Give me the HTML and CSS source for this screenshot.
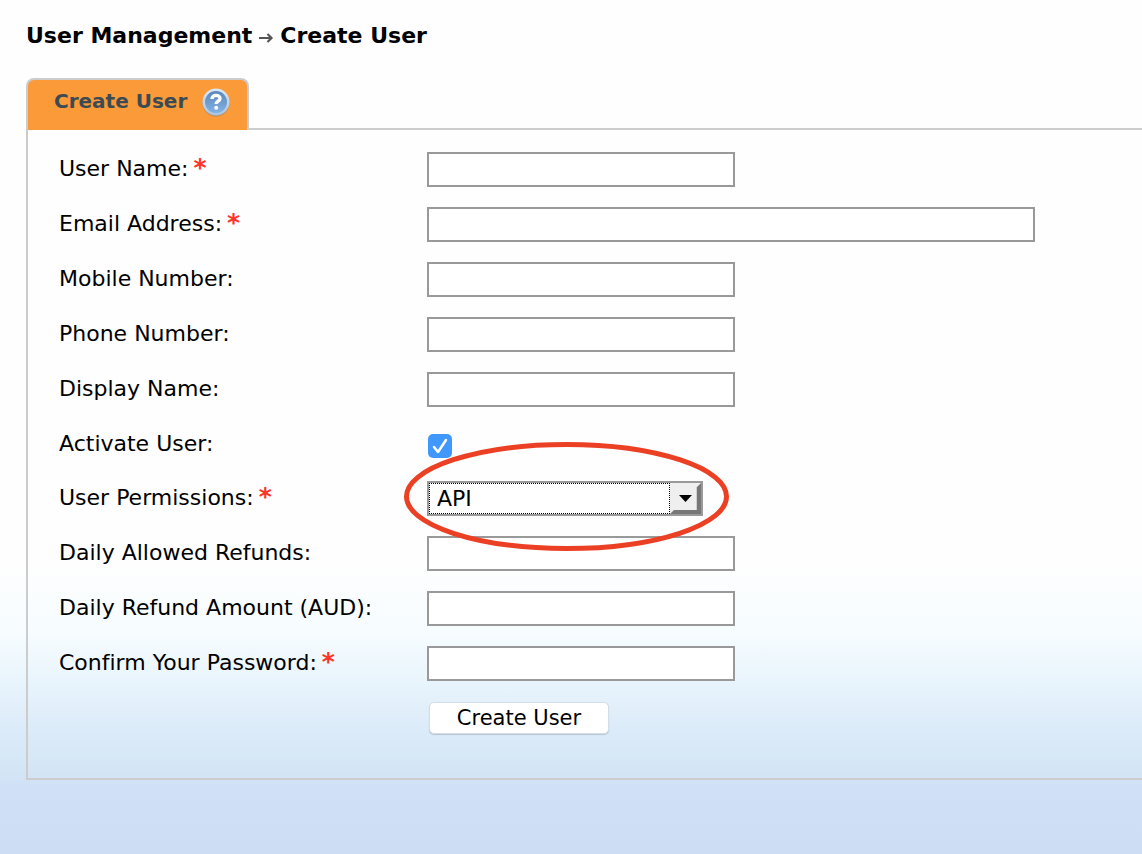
FILE: index.html
```html
<!DOCTYPE html>
<html lang="en">
<head>
<meta charset="utf-8">
<meta name="viewport" content="width=device-width, initial-scale=1">
<title>User Management - Create User</title>
<link rel="stylesheet" href="styles.css">
</head>
<body>
<main class="page">
  <h1 class="crumbs">
    <span>User Management</span>
    <svg class="crumb-arrow" viewBox="0 0 16 14" aria-hidden="true"><path d="M1 7h12M9.500 3l4 4-4 4" fill="none" stroke="#555" stroke-width="2.200"/></svg>
    <span>Create User</span>
  </h1>

  <div class="tabs">
    <div class="tab">
      <h2 class="tab-title">Create User</h2>
      <button class="help" type="button" aria-label="Help">
        <svg viewBox="0 0 30 30" aria-hidden="true">
          <defs>
            <linearGradient id="disc" x1="0" y1="0" x2="0" y2="1"><stop offset="0" stop-color="#5c86bd"/><stop offset="1" stop-color="#82b2e2"/></linearGradient>
            <linearGradient id="rim" x1="0" y1="0" x2="0" y2="1"><stop offset="0" stop-color="#dce9f6"/><stop offset="1" stop-color="#a9c3de"/></linearGradient>
          </defs>
          <circle cx="15" cy="16" r="13.500" fill="#8a7f78" opacity=".6"/>
          <circle cx="15" cy="15" r="13.500" fill="url(#rim)"/>
          <circle cx="15" cy="15" r="11" fill="url(#disc)"/>
          <path d="M11 12c0-4.800 8-4.800 8-.5 0 2.600-3.800 2.700-3.800 5.500" fill="none" stroke="#fff" stroke-width="3.400"/>
          <circle cx="15.200" cy="20.800" r="2" fill="#fff"/>
        </svg>
      </button>
    </div>
    <div class="tab-rule"></div>
  </div>

  <form class="panel">
    <div class="row"><label class="label" for="user">User Name:<span class="req">*</span></label><input class="field" id="user" type="text" required></div>
    <div class="row"><label class="label" for="email">Email Address:<span class="req">*</span></label><input class="field wide" id="email" type="email" required></div>
    <div class="row"><label class="label" for="mobile">Mobile Number:</label><input class="field" id="mobile" type="tel"></div>
    <div class="row"><label class="label" for="phone">Phone Number:</label><input class="field" id="phone" type="tel"></div>
    <div class="row"><label class="label" for="display">Display Name:</label><input class="field" id="display" type="text"></div>
    <div class="row row-check"><label class="label" for="active">Activate User:</label><input class="check" id="active" type="checkbox" checked></div>
    <div class="row">
      <label class="label" for="perm">User Permissions:<span class="req">*</span></label>
      <div class="select-wrap">
        <select class="select" id="perm"><option>API</option></select>
        <span class="focus-line"></span>
        <svg class="drop" viewBox="0 0 31 31" aria-hidden="true">
          <path d="M0 0h31v31H0z" fill="#efefef"/>
          <path d="M31 0v31H0l4-4h23V4z" fill="#777"/>
          <path d="M0 31l4-4h22V4l1 0v23H4z" fill="#d0d0d0"/>
          <path d="M9 12h13l-6.500 7z" fill="#000"/>
        </svg>
        <svg class="ring" viewBox="0 0 326 110" aria-hidden="true"><ellipse cx="162.500" cy="55.500" rx="160" ry="52" fill="none" stroke="#eb4024" stroke-width="5"/></svg>
      </div>
    </div>
    <div class="row"><label class="label" for="refunds">Daily Allowed Refunds:</label><input class="field" id="refunds" type="text"></div>
    <div class="row"><label class="label" for="amount">Daily Refund Amount (AUD):</label><input class="field" id="amount" type="text"></div>
    <div class="row"><label class="label" for="pass">Confirm Your Password:<span class="req">*</span></label><input class="field" id="pass" type="password" required></div>
    <div class="row"><button class="submit" type="submit">Create User</button></div>
  </form>
</main>
</body>
</html>
```

FILE: styles.css
```css
* {
  box-sizing: border-box;
}

body {
  margin: 0;
  min-height: 100vh;
  background: #fefefe linear-gradient(to bottom, #fefefe 0, #f6fcff 70px, #e8f4fc 120px, #dcebf9 165px, #d3e5f5 210px, #d0e1f7 222px, #ccddf4 290px) left bottom / 100% 290px no-repeat;
  color: #000;
  font: 22px/28px Verdana, "DejaVu Sans", sans-serif;
  font-variant-ligatures: none;
}

.page {
  padding: 22px 0 74px 26px;
}

.crumbs {
  display: flex;
  align-items: center;
  gap: 6px;
  margin: 0 0 28px;
  font-size: 22px;
  line-height: 28px;
}

.crumb-arrow {
  width: 16px;
  height: 14px;
  margin-top: 3px;
}

.tabs {
  display: flex;
}

.tab {
  display: flex;
  align-items: center;
  gap: 14px;
  height: 52px;
  padding: 0 16px 6px 26px;
  border: 2px solid #ccc;
  border-bottom: 0;
  border-radius: 8px 8px 0 0;
  background: #fa9a38;
}

.tab-title {
  margin: 0;
  padding-bottom: 2px;
  color: #3c4a54;
  font-size: 20px;
  line-height: 28px;
}

.help {
  width: 30px;
  height: 30px;
  padding: 0;
  border: 0;
  background: none;
}

.help svg {
  display: block;
}

.tab-rule {
  flex: 1;
  border-bottom: 2px solid #ccc;
}

.panel {
  display: grid;
  gap: 20px;
  padding: 22px 0 42px 31px;
  border: solid #ccc;
  border-width: 0 0 2px 2px;
}

.row {
  display: grid;
  grid-template-columns: 368px minmax(0, 1fr);
  height: 35px;
}

.row-check {
  height: 34px;
}

.label {
  padding-top: 3px;
}

.req {
  margin-left: 5px;
  color: #ff3326;
  font-size: 25px;
  font-weight: bold;
  line-height: 1px;
}

.field {
  width: 308px;
  height: 35px;
  padding: 0 8px;
  border: 2px solid #999;
  background: #fff;
  font: inherit;
}

.wide {
  width: 608px;
  max-width: 100%;
}

.check {
  appearance: none;
  width: 24px;
  height: 24px;
  margin: 7px 0 0 1px;
  border-radius: 5px;
  background: #4098fc url("data:image/svg+xml,%3Csvg xmlns='http://www.w3.org/2000/svg' viewBox='0 0 24 24'%3E%3Cpath d='M6 13l4 5 8-12' fill='none' stroke='white' stroke-width='2.500' stroke-linecap='round' stroke-linejoin='round'/%3E%3C/svg%3E");
}

.select-wrap {
  position: relative;
  width: 276px;
}

.select {
  appearance: none;
  display: block;
  width: 100%;
  height: 35px;
  padding: 1px 36px 0 8px;
  border: 2px solid #999;
  border-radius: 0;
  outline: 0;
  background: #fff;
  color: #000;
  font: 22px/28px "DejaVu Sans", sans-serif;
}

.focus-line,
.drop,
.ring {
  position: absolute;
  pointer-events: none;
}

.focus-line {
  inset: 2px 33px 2px 2px;
  border: 1px dotted #000;
}

.drop {
  top: 2px;
  right: 2px;
  width: 31px;
  height: 31px;
}

.ring {
  top: -40px;
  left: -23px;
  z-index: 1;
  width: 326px;
  height: 110px;
}

.submit {
  grid-column: 2;
  width: 180px;
  height: 32px;
  margin: 1px 0 0 2px;
  padding: 0;
  border: 1px solid #d3dde6;
  border-radius: 5px;
  background: #fff;
  box-shadow: 0 1px 1px #b9c5d0;
  color: #000;
  font: 21px/28px "DejaVu Sans", sans-serif;
}
```
